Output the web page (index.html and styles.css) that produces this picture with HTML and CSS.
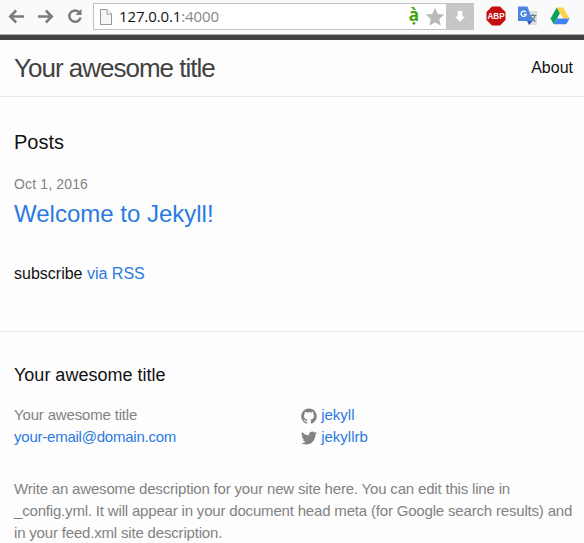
FILE: index.html
```html
<!DOCTYPE html>
<html lang="en">
<head>
<meta charset="utf-8">
<title>Your awesome title</title>
<link rel="stylesheet" href="styles.css">
</head>
<body>
<div class="toolbar">
  <svg class="nav" width="84" height="35" viewBox="0 0 84 35" fill="none" stroke="#7c7c7c" stroke-width="2.5">
    <path d="M24 16.5H10.5M16.2 10.5l-6 6 6 6"/>
    <path d="M38 16.5h13.500M45.800 10.500l6 6-6 6"/>
    <path d="M79.500 12.500A5.700 5.700 0 1 0 80.600 17.500"/>
    <path d="M81.500 9v6h-6z" fill="#7c7c7c" stroke="none"/>
  </svg>
  <div class="omnibox">
    <svg class="page-icon" width="12" height="16" viewBox="0 0 12 16">
      <path d="M.5.5H7L11.500 5V15.500H.5z" fill="#f6f6f6" stroke="#969696"/>
      <path d="M7 .5V5h4.500" fill="#fff" stroke="#969696"/>
    </svg>
    <span class="url">127.0.0.1<span class="port">:4000</span></span>
    <span class="accent">ạ̀</span>
    <svg class="star" width="20" height="20" viewBox="0 0 20 20"><path d="M10 .8l2.700 6.100 6.500.7-4.900 4.400 1.400 6.700L10 15.300l-5.700 3.400L5.700 12 .8 7.600l6.500-.7z" fill="#b9b9b9"/></svg>
    <span class="download"><svg width="12" height="14" viewBox="0 0 12 14"><path d="M3.700 1h4.600v5.500H11L6 12 1 6.500h2.700z" fill="#fff"/></svg></span>
  </div>
  <svg class="ext" width="20" height="20" viewBox="0 0 20 20">
    <path d="M6 .5h8L19.500 6v8L14 19.500H6L.5 14V6z" fill="#c70d0d"/>
    <text x="10" y="13.400" class="abp" text-anchor="middle" textLength="17" lengthAdjust="spacingAndGlyphs">ABP</text>
  </svg>
  <svg class="ext translate" width="20" height="20" viewBox="0 0 20 20">
    <path d="M8 5h11v14h-8z" fill="#dedede"/>
    <path d="M11.500 9.500h7M15 8v1.500M17 9.500c-.5 3-2.500 5-5 6M13 10.500c1 2.500 2.500 4 4.500 5" stroke="#607d8b" stroke-width="1.200" fill="none"/>
    <path d="M0 .5h9.500L14.500 15H0z" fill="#4a86e0"/>
    <path d="M9 15h5.500L11 19z" fill="#3059b5"/>
    <path d="M7.700 6.200A2.600 2.600 0 1 0 8.200 8.300H5.800" fill="none" stroke="#fff" stroke-width="1.300"/>
  </svg>
  <svg class="ext drive" width="20" height="18" viewBox="0 0 20 18">
    <path d="M6.800.5L.5 11.500l3.200 5.800L10 6.200z" fill="#11a15f"/>
    <path d="M6.800.5h6.300l6.300 11h-6.200z" fill="#ffcf48"/>
    <path d="M6.900 11.500h12.600l-3.200 5.800H3.700z" fill="#4284f4"/>
  </svg>
</div>
<header class="site-header">
  <a class="site-title">Your awesome title</a>
  <a class="page-link">About</a>
</header>
<main class="page-content">
  <h1>Posts</h1>
  <div class="post">
    <span class="post-meta">Oct 1, 2016</span>
    <h2><a>Welcome to Jekyll!</a></h2>
  </div>
  <p class="subscribe">subscribe <a>via RSS</a></p>
</main>
<footer class="site-footer">
  <h2>Your awesome title</h2>
  <div class="columns">
    <div class="contact">Your awesome title<br><a>your-email@domain.com</a></div>
    <div class="social">
      <div><svg width="16" height="16" viewBox="0 0 16 16"><path fill="#828282" d="M7.999.431c-4.285 0-7.760 3.474-7.760 7.761 0 3.428 2.223 6.337 5.307 7.363.388.071.530-.168.530-.374 0-.184-.007-.672-.010-1.320-2.159.469-2.614-1.040-2.614-1.040-.353-.896-.862-1.135-.862-1.135-.705-.481.053-.472.053-.472.779.055 1.189.800 1.189.800.692 1.186 1.816.843 2.258.645.071-.502.271-.843.493-1.037-1.723-.195-3.535-.862-3.535-3.835 0-.847.302-1.540.799-2.082-.080-.196-.346-.985.076-2.053 0 0 .651-.209 2.134.796a7.436 7.436 0 0 1 1.943-.261c.659.003 1.323.089 1.943.261 1.482-1.005 2.132-.796 2.132-.796.423 1.068.157 1.857.077 2.053.497.542.798 1.235.798 2.082 0 2.981-1.815 3.637-3.543 3.829.279.240.527.713.527 1.437 0 1.037-.010 1.874-.010 2.129 0 .208.140.449.534.373 3.081-1.028 5.302-3.935 5.302-7.362C15.760 3.906 12.285.431 7.999.431z"/></svg> <a>jekyll</a></div>
      <div><svg width="16" height="16" viewBox="0 0 16 16"><path fill="#828282" d="M15.969 3.058c-.586.260-1.217.436-1.878.515.675-.405 1.194-1.045 1.438-1.809-.632.375-1.332.647-2.076.793A3.270 3.270 0 0 0 7.880 5.540c-2.718-.137-5.128-1.439-6.741-3.418a3.267 3.267 0 0 0 1.011 4.366 3.240 3.240 0 0 1-1.481-.409v.041a3.273 3.273 0 0 0 2.623 3.207 3.270 3.270 0 0 1-1.477.056 3.273 3.273 0 0 0 3.054 2.271A6.570 6.570 0 0 1 .027 13.008a9.256 9.256 0 0 0 5.013 1.469c6.015 0 9.304-4.983 9.304-9.304 0-.142-.003-.283-.009-.423a6.630 6.630 0 0 0 1.634-1.692z"/></svg> <a>jekyllrb</a></div>
    </div>
  </div>
  <p class="description">Write an awesome description for your new site here. You can edit this line in _config.yml. It will appear in your document head meta (for Google search results) and in your feed.xml site description.</p>
</footer>
</body>
</html>
```
FILE: styles.css
```css
* { box-sizing: border-box; }
html { overflow: hidden; }
body {
  margin: 0;
  font: 16px/24px "Liberation Sans", Arial, sans-serif;
  color: #111;
  background: #fdfdfd;
}
h1, h2, p { margin: 0; font-weight: 400; }
a { color: #2a7ae2; }

.toolbar {
  display: flex;
  align-items: center;
  height: 35px;
  padding-bottom: 2px;
  background: #fafafa;
  border-bottom: 1px solid #aaa;
}
.nav { flex: none; margin-top: 2px; }
.omnibox {
  display: flex;
  align-items: center;
  width: 381px;
  height: 27px;
  margin: 1px 0 0 9px;
  padding-left: 7px;
  background: #fff;
  border: 1px solid #c3c3c3;
}
.page-icon { margin-left: -1px; }
.url {
  margin: -1px 0 0 7px;
  font: 15px/24px "Open Sans", "Noto Sans", sans-serif;
  letter-spacing: -0.12px;
  flex: 1;
}
.port { color: #888; }
.accent {
  width: 12px;
  margin: -3px 5px 0 0;
  font: bold 17px/24px "Open Sans", "Noto Sans", sans-serif;
  color: #43a30c;
  text-align: center;
}
.star { flex: none; }
.download {
  display: flex;
  align-items: center;
  justify-content: center;
  width: 28px;
  height: 27px;
  margin: -1px -1px -1px 1px;
  background: #c6c6c6;
}
.ext { flex: none; margin-left: 12px; }
.translate { margin-left: 12px; }
.drive { margin-left: 12px; }
.abp { font: bold 9.5px "Liberation Sans", Arial, sans-serif; fill: #fff; }

.site-header {
  display: flex;
  justify-content: space-between;
  height: 62px;
  padding: 0 11px 0 14px;
  border-top: 5px solid #424242;
  border-bottom: 1px solid #e8e8e8;
  line-height: 56px;
}
.site-title { font-size: 26px; letter-spacing: -1px; color: #424242; }
.page-link { color: #111; }

.page-content { height: 234px; padding: 30px 14px; }
.page-content h1 { margin-bottom: 15px; font-size: 20px; line-height: 30px; }
.post { margin-bottom: 30px; }
.post-meta { font-size: 14px; letter-spacing: 0.15px; color: #828282; }
.post h2 { font-size: 24px; line-height: 36px; }

.site-footer {
  padding: 30px 8px 0 14px;
  border-top: 1px solid #e8e8e8;
  font-size: 15px;
  line-height: 22px;
  color: #828282;
}
.site-footer h2 { margin-bottom: 15px; font-size: 18px; line-height: 27px; color: #111; }
.columns { display: flex; margin-bottom: 30px; }
.contact { width: 287px; letter-spacing: -0.17px; }
.contact a { letter-spacing: -0.23px; }
.social svg { vertical-align: middle; }
.description { letter-spacing: -0.18px; }
```
